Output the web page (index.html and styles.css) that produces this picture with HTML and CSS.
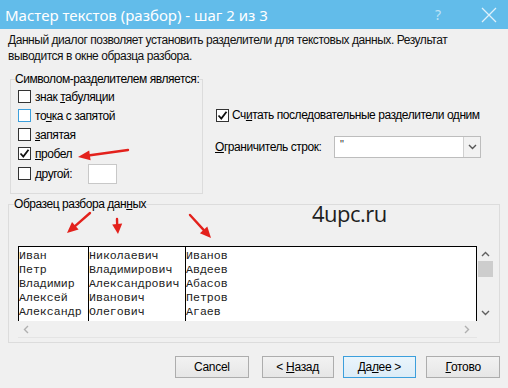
FILE: index.html
```html
<!DOCTYPE html>
<html lang="ru">
<head>
<meta charset="utf-8">
<title>Мастер текстов</title>
<link rel="stylesheet" href="styles.css">
</head>
<body>
<div class="titlebar">
  <span class="title">Мастер текстов (разбор) - шаг 2 из 3</span>
  <span class="help">?</span>
  <svg class="close" width="16" height="16" viewBox="0 0 16 16"><path d="M1 1 L15 15 M15 1 L1 15" stroke="#dff1fb" stroke-width="1.3" fill="none"/></svg>
</div>
<div class="content">
  <p class="intro">Данный диалог позволяет установить разделители для текстовых данных. Результат<br>выводится в окне образца разбора.</p>
  <div class="options">
    <fieldset class="delims">
      <legend>Символом-разделителем является:</legend>
      <div class="cbrow"><span class="cb"></span><span>знак <u>т</u>абуляции</span></div>
      <div class="cbrow"><span class="cb hover"></span><span>то<u>ч</u>ка с запятой</span></div>
      <div class="cbrow"><span class="cb"></span><span><u>з</u>апятая</span></div>
      <div class="cbrow"><span class="cb"><svg width="11" height="11" viewBox="0 0 11 11"><path d="M1.5 5.5 L4.3 8.5 L9.5 1.8" stroke="#111" stroke-width="1.8" fill="none"/></svg></span><span><u>п</u>робел</span></div>
      <div class="cbrow last"><span class="cb"></span><span class="otherlabel"><u>д</u>ругой:</span><span class="other"></span></div>
    </fieldset>
    <div class="right">
      <div class="cbrow consec"><span class="cb"><svg width="11" height="11" viewBox="0 0 11 11"><path d="M1.5 5.5 L4.3 8.5 L9.5 1.8" stroke="#111" stroke-width="1.8" fill="none"/></svg></span><span>Сч<u>и</u>тать последовательные разделители одним</span></div>
      <div class="qualrow">
        <span class="quallabel"><u>О</u>граничитель строк:</span>
        <div class="combo"><span class="comboval">"</span><span class="combobtn"><svg width="9" height="6" viewBox="0 0 9 6"><path d="M1 1 L4.5 4.5 L8 1" stroke="#555" stroke-width="1.4" fill="none"/></svg></span></div>
      </div>
    </div>
  </div>
  <fieldset class="frame">
    <legend>Образец разбора дан<u>н</u>ых</legend>
    <div class="preview">
      <div class="pv-top">
        <div class="pv-data">
          <div class="col c1">Иван<br>Петр<br>Владимир<br>Алексей<br>Александр</div>
          <div class="col c2">Николаевич<br>Владимирович<br>Александрович<br>Иванович<br>Олегович</div>
          <div class="col c3">Иванов<br>Авдеев<br>Абасов<br>Петров<br>Агаев</div>
        </div>
        <div class="vscroll">
          <svg width="9" height="6" viewBox="0 0 9 6"><path d="M1 5 L4.5 1.5 L8 5" stroke="#606060" stroke-width="1.4" fill="none"/></svg>
          <div class="thumb"></div>
          <div class="vspace"></div>
          <svg width="9" height="6" viewBox="0 0 9 6"><path d="M1 1 L4.5 4.5 L8 1" stroke="#606060" stroke-width="1.4" fill="none"/></svg>
        </div>
      </div>
      <div class="pv-bottom">
        <div class="hscroll">
          <svg width="6" height="9" viewBox="0 0 6 9"><path d="M5 1 L1.5 4.5 L5 8" stroke="#b0b0b0" stroke-width="1.4" fill="none"/></svg>
          <svg width="6" height="9" viewBox="0 0 6 9"><path d="M1 1 L4.5 4.5 L1 8" stroke="#b0b0b0" stroke-width="1.4" fill="none"/></svg>
        </div>
        <div class="corner"></div>
      </div>
    </div>
  </fieldset>
  <div class="buttons">
    <button class="btn b-cancel">Cancel</button>
    <button class="btn b-back">&lt; <u>Н</u>азад</button>
    <button class="btn b-next default">Да<u>л</u>ее &gt;</button>
    <button class="btn b-done"><u>Г</u>отово</button>
  </div>
</div>
<div class="watermark">4upc.ru</div>
<svg class="arrows" width="508" height="388" viewBox="0 0 508 388">
  <g stroke="#e3211c" stroke-width="2.4" fill="none" stroke-linecap="round">
    <path d="M128 150 L90 155.3"/>
    <path d="M90 213 L75.3 225.8"/>
    <path d="M117 219 L117.2 225"/>
    <path d="M190 215 L203.6 229.9"/>
  </g>
  <g fill="#e3211c">
    <polygon points="78,157 90.6,160.3 89.2,150.4"/>
    <polygon points="67,233 78.6,229.6 72,222"/>
    <polygon points="118,234 122.2,223.6 112.2,224.4"/>
    <polygon points="211,238 207.3,226.5 199.9,233.3"/>
  </g>
</svg>
</body>
</html>
```

FILE: styles.css
```css
html, body {
  margin: 0;
  padding: 0;
}
body {
  width: 508px;
  height: 388px;
  background: #f0f0f0;
  font-family: "Liberation Sans", Arial, sans-serif;
  font-size: 12px;
  letter-spacing: -0.45px;
  color: #000;
  overflow: hidden;
  position: relative;
  white-space: nowrap;
}
u {
  text-decoration: underline;
  text-underline-offset: 1px;
}
.titlebar {
  height: 29px;
  background: #62bcea;
  display: flex;
  align-items: center;
  color: #fff;
  font-family: "Noto Sans", sans-serif;
  font-size: 15px;
  letter-spacing: 0;
  padding-left: 5px;
}
.title {
  flex: 1;
}
.help {
  color: #bfe3f6;
  font-size: 14px;
  margin-right: 40px;
}
.close {
  margin-right: 11px;
}
.content {
  padding: 0 8px;
}
.intro {
  margin: 3px 0 0 0;
  line-height: 16px;
  color: #111;
}
.options {
  display: flex;
  margin-top: 7px;
  padding-left: 2px;
}
fieldset {
  margin: 0;
  box-sizing: border-box;
  border: 1px solid #dcdcdc;
  min-width: 0;
}
fieldset legend {
  line-height: 16px;
  padding: 0;
}
.delims {
  width: 193px;
  height: 123px;
  padding: 0 0 0 7px;
}
.delims legend {
  margin-left: -3px;
}
.cbrow {
  display: flex;
  align-items: center;
  height: 19px;
}
.cbrow.last {
  height: 21px;
}
.cb {
  box-sizing: border-box;
  width: 13px;
  height: 13px;
  border: 1px solid #333;
  background: #fff;
  margin-right: 4px;
  display: flex;
  align-items: center;
  justify-content: center;
  flex: none;
}
.cb.hover {
  border-color: #3c9fdc;
}
.otherlabel {
  width: 53px;
}
.other {
  box-sizing: border-box;
  width: 29px;
  height: 20px;
  background: #fff;
  border: 1px solid #c8c8c8;
}
.right {
  margin-left: 12px;
}
.consec {
  margin-top: 36px;
  height: 16px;
}
.consec .cb {
  margin-left: 1px;
  margin-right: 3px;
}
.qualrow {
  display: flex;
  align-items: center;
  margin-top: 13px;
  height: 22px;
}
.quallabel {
  width: 119px;
}
.combo {
  box-sizing: border-box;
  width: 147px;
  height: 22px;
  background: #fff;
  border: 1px solid #bdbdbd;
  display: flex;
}
.comboval {
  flex: 1;
  padding-left: 5px;
  line-height: 14px;
  font-size: 11px;
  color: #333;
}
.combobtn {
  width: 16px;
  border-left: 1px solid #d0d0d0;
  background: #f2f2f2;
  display: flex;
  align-items: center;
  justify-content: center;
}
.frame {
  margin-top: 2px;
  width: 492px;
  height: 147px;
  padding: 0 5px 0 9px;
}
.frame legend {
  margin-left: -4px;
}
.preview {
  margin-top: 34px;
  width: 476px;
}
.pv-top {
  display: flex;
  height: 75px;
}
.pv-data {
  box-sizing: border-box;
  width: 459px;
  height: 75px;
  background: #fff;
  border: 1px solid #000;
  border-bottom: none;
  display: flex;
  overflow: hidden;
  font-family: "Liberation Mono", "DejaVu Sans Mono", monospace;
  font-size: 11.6px;
  letter-spacing: 0;
  line-height: 14px;
  color: #222;
}
.col {
  padding-top: 2px;
}
.c1 {
  width: 69px;
  border-right: 1px solid #000;
}
.c2 {
  width: 96px;
  border-right: 1px solid #000;
}
.c3 {
  flex: 1;
}
.vscroll {
  width: 17px;
  display: flex;
  flex-direction: column;
  align-items: center;
  padding-top: 5px;
  box-sizing: border-box;
}
.thumb {
  width: 15px;
  height: 16px;
  background: #cdcdcd;
  margin-top: 4px;
}
.vspace {
  flex: 1;
}
.vscroll svg:last-child {
  margin-bottom: 5px;
}
.pv-bottom {
  display: flex;
  height: 17px;
}
.hscroll {
  flex: 1;
  display: flex;
  align-items: center;
  justify-content: space-between;
  padding: 0 7px 0 5px;
  border-bottom: 1px solid #e4e4e4;
}
.corner {
  width: 17px;
}
.buttons {
  display: flex;
  margin-top: 13px;
}
.btn {
  box-sizing: border-box;
  height: 22px;
  width: 74px;
  border: 1px solid #adadad;
  background: linear-gradient(#f2f2f2, #e6e6e6);
  font-family: "Liberation Sans", Arial, sans-serif;
  font-size: 12px;
  letter-spacing: -0.3px;
  color: #000;
  padding: 0;
  line-height: 18px;
}
.btn.default {
  border-color: #3c9fdc;
  background: linear-gradient(#eaf5fc, #dcecf7);
}
.b-cancel {
  margin-left: 167px;
}
.b-back {
  margin-left: 13px;
  width: 72px;
}
.b-next {
  margin-left: 9px;
}
.b-done {
  margin-left: 10px;
}
.watermark {
  position: absolute;
  left: 312px;
  top: 198px;
  font-family: "Open Sans", sans-serif;
  font-size: 22px;
  letter-spacing: -0.5px;
  color: #1e1e1e;
}
.arrows {
  position: absolute;
  left: 0;
  top: 0;
  pointer-events: none;
}
```
